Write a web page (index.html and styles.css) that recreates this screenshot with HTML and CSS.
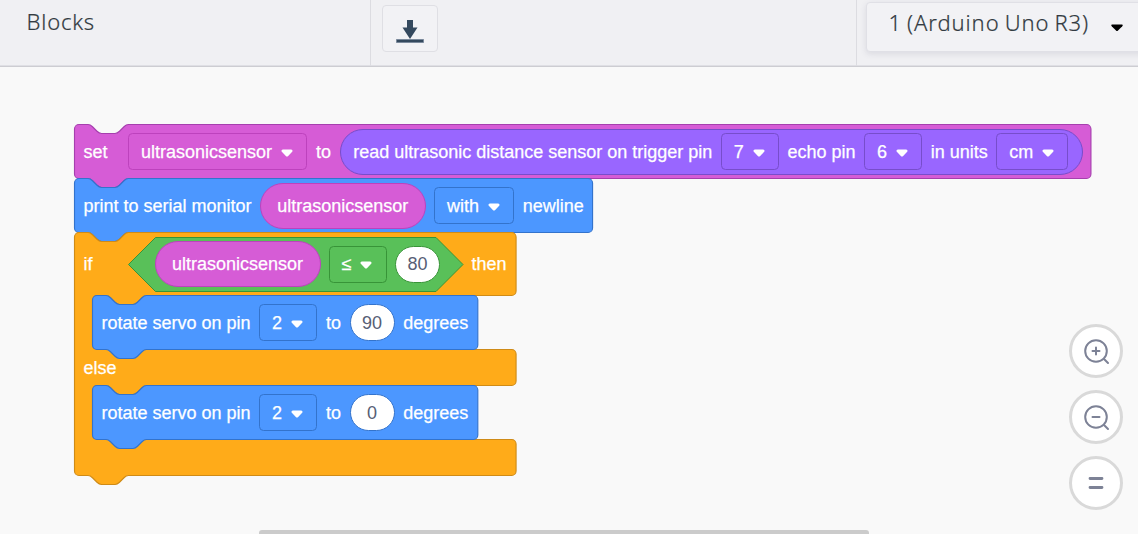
FILE: index.html
```html
<!DOCTYPE html>
<html lang="en">
<head>
<meta charset="utf-8">
<title>Blocks</title>
<link rel="stylesheet" href="styles.css">
</head>
<body>
<svg class="defs" width="0" height="0">
  <symbol id="caret" viewBox="0 0 12 8"><path d="M1.800 .5H10.200Q12.200 1 11.200 2.700L7.200 6.900Q6 7.900 4.800 6.900L.8 2.700Q-.2 1 1.800 .5Z" fill="#fff"/></symbol>
</svg>
<div class="app">
  <header class="bar">
    <div class="mode">Blocks</div>
    <div class="tools">
      <button class="download" aria-label="Download">
        <svg width="28" height="24" viewBox="0 0 28 24"><path d="M11 0H17V7.500H21.500L14 19L6.500 7.500H11Z" fill="#34495e"/><path d="M.5 19.500H27.500V22.500H.5Z" fill="#34495e" stroke="#7a899b" stroke-width="1"/></svg>
      </button>
    </div>
    <div class="target">
      <div class="device"><span class="device-name">1 (Arduino Uno R3)</span>
        <svg width="12" height="8" viewBox="0 0 12 8"><path d="M1 .5H11Q12.300 1 11.300 2.200L7 6.600Q6 7.600 5 6.600L.7 2.200Q-.3 1 1 .5Z" fill="#000"/></svg>
      </div>
    </div>
  </header>
  <main class="canvas">
    <div class="stack">
      <div class="block set">
        <svg class="shape"><path transform="translate(.5 .5) scale(1.125)" d="M0 4A4 4 0 0 1 4 0H12c2 0 3 1 4 2l4 4c1 1 2 2 4 2h12c2 0 3-1 4-2l4-4c1-1 2-2 4-2H899.500a4 4 0 0 1 4 4V44a4 4 0 0 1-4 4H48c-2 0-3 1-4 2l-4 4c-1 1-2 2-4 2H24c-2 0-3-1-4-2l-4-4c-1-1-2-2-4-2H4a4 4 0 0 1-4-4Z"/></svg>
        <span class="lead">set</span>
        <span class="field">ultrasonicsensor<svg class="caret"><use href="#caret"/></svg></span>
        <span>to</span>
        <span class="pill sensor">
          <span>read ultrasonic distance sensor on trigger pin</span>
          <span class="field">7<svg class="caret"><use href="#caret"/></svg></span>
          <span>echo pin</span>
          <span class="field">6<svg class="caret"><use href="#caret"/></svg></span>
          <span>in units</span>
          <span class="field">cm<svg class="caret"><use href="#caret"/></svg></span>
        </span>
      </div>
      <div class="block print">
        <svg class="shape"><path transform="translate(.5 .5) scale(1.125)" d="M0 4A4 4 0 0 1 4 0H12c2 0 3 1 4 2l4 4c1 1 2 2 4 2h12c2 0 3-1 4-2l4-4c1-1 2-2 4-2H456.500a4 4 0 0 1 4 4V44a4 4 0 0 1-4 4H48c-2 0-3 1-4 2l-4 4c-1 1-2 2-4 2H24c-2 0-3-1-4-2l-4-4c-1-1-2-2-4-2H4a4 4 0 0 1-4-4Z"/></svg>
        <span>print to serial monitor</span>
        <span class="pill variable">ultrasonicsensor</span>
        <span class="field">with<svg class="caret"><use href="#caret"/></svg></span>
        <span>newline</span>
      </div>
      <div class="branch">
        <svg class="shape"><path transform="translate(.5 .5) scale(1.125)" d="M0 4A4 4 0 0 1 4 0H12c2 0 3 1 4 2l4 4c1 1 2 2 4 2h12c2 0 3-1 4-2l4-4c1-1 2-2 4-2H388.500a4 4 0 0 1 4 4V52a4 4 0 0 1-4 4H64c-2 0-3 1-4 2l-4 4c-1 1-2 2-4 2H40c-2 0-3-1-4-2l-4-4c-1-1-2-2-4-2H20a4 4 0 0 0-4 4V100a4 4 0 0 0 4 4H388.500a4 4 0 0 1 4 4V132a4 4 0 0 1-4 4H64c-2 0-3 1-4 2l-4 4c-1 1-2 2-4 2H40c-2 0-3-1-4-2l-4-4c-1-1-2-2-4-2H20a4 4 0 0 0-4 4V180a4 4 0 0 0 4 4H388.500a4 4 0 0 1 4 4V212a4 4 0 0 1-4 4H48c-2 0-3 1-4 2l-4 4c-1 1-2 2-4 2H24c-2 0-3-1-4-2l-4-4c-1-1-2-2-4-2H4a4 4 0 0 1-4-4Z"/></svg>
        <div class="condition">
          <span class="lead">if</span>
          <span class="hex">
            <svg class="shape"><path d="M.5 27.500L27.500.5H308L335 27.500L308 54.500H27.500Z"/></svg>
            <span class="pill variable">ultrasonicsensor</span>
            <span class="field">≤<svg class="caret"><use href="#caret"/></svg></span>
            <span class="value">80</span>
          </span>
          <span>then</span>
        </div>
        <div class="block servo">
          <svg class="shape"><path transform="translate(.5 .5) scale(1.125)" d="M0 4A4 4 0 0 1 4 0H12c2 0 3 1 4 2l4 4c1 1 2 2 4 2h12c2 0 3-1 4-2l4-4c1-1 2-2 4-2H338.500a4 4 0 0 1 4 4V44a4 4 0 0 1-4 4H48c-2 0-3 1-4 2l-4 4c-1 1-2 2-4 2H24c-2 0-3-1-4-2l-4-4c-1-1-2-2-4-2H4a4 4 0 0 1-4-4Z"/></svg>
          <span>rotate servo on pin</span>
          <span class="field">2<svg class="caret"><use href="#caret"/></svg></span>
          <span>to</span>
          <span class="value">90</span>
          <span>degrees</span>
        </div>
        <div class="else">else</div>
        <div class="block servo">
          <svg class="shape"><path transform="translate(.5 .5) scale(1.125)" d="M0 4A4 4 0 0 1 4 0H12c2 0 3 1 4 2l4 4c1 1 2 2 4 2h12c2 0 3-1 4-2l4-4c1-1 2-2 4-2H338.500a4 4 0 0 1 4 4V44a4 4 0 0 1-4 4H48c-2 0-3 1-4 2l-4 4c-1 1-2 2-4 2H24c-2 0-3-1-4-2l-4-4c-1-1-2-2-4-2H4a4 4 0 0 1-4-4Z"/></svg>
          <span>rotate servo on pin</span>
          <span class="field">2<svg class="caret"><use href="#caret"/></svg></span>
          <span>to</span>
          <span class="value">0</span>
          <span>degrees</span>
        </div>
      </div>
    </div>
    <nav class="zoom">
      <button aria-label="Zoom in"><svg width="48" height="48" viewBox="0 0 48 48"><circle cx="24" cy="24" r="10.800"/><path d="M32 32L36 36M24 20.500V27.500M20.500 24H27.500"/></svg></button>
      <button aria-label="Zoom out"><svg width="48" height="48" viewBox="0 0 48 48"><circle cx="24" cy="24" r="10.800"/><path d="M32 32L36 36M20.500 24H27.500"/></svg></button>
      <button aria-label="Reset zoom"><svg width="48" height="48" viewBox="0 0 48 48"><path class="thick" d="M18 19.500H30M18 28.500H30"/></svg></button>
    </nav>
    <div class="scrollbar"></div>
  </main>
</div>
</body>
</html>
```

FILE: styles.css
```css
* { box-sizing: border-box; }
body { margin: 0; background: #f9f9f9; }
.defs { position: absolute; }
button { padding: 0; font: inherit; }
.app { height: 534px; display: flex; flex-direction: column; overflow: hidden; }

.bar {
  height: 67px;
  flex: none;
  display: flex;
  background: #f0f0f3;
  border-bottom: 1px solid #cdcdd2;
  box-shadow: inset 0 -1px #dfdfe4;
  font-family: "Noto Sans", "Open Sans", sans-serif;
  font-weight: 300;
  font-size: 22px;
  line-height: 30px;
  color: #333b42;
  -webkit-text-stroke: .2px currentColor;
}
.mode { width: 371px; padding: 6px 0 0 26.5px; border-right: 1px solid #dcdce1; letter-spacing: .8px; }
.tools { width: 486px; padding: 5px 0 0 11px; border-right: 1px solid #dcdce1; }
.download {
  width: 56px;
  height: 47px;
  display: grid;
  place-items: center;
  padding-top: 6px;
  background: #f2f2f5;
  border: 1px solid #dfdfe4;
  border-radius: 4px;
}
.target { flex: 1; padding: 2px 0 0 9px; overflow: hidden; }
.device {
  width: 290px;
  height: 50px;
  display: flex;
  align-items: flex-start;
  padding: 4px 0 0 21.5px;
  background: #f2f2f5;
  border: 1px solid #e0e0e6;
  border-radius: 4px;
  box-shadow: 0 2px 6px rgba(60, 60, 90, .12);
  letter-spacing: .9px;
  word-spacing: -1.5px;
}
.device-name { width: 222.5px; white-space: nowrap; }
.device svg { margin-top: 17px; }

.canvas {
  flex: 1;
  display: grid;
  grid-template-columns: minmax(0, 1fr) 54px;
  grid-template-rows: 1fr 4px;
  padding: 57px 15px 0 74px;
}
.stack {
  font-family: "Liberation Sans", Arial, sans-serif;
  font-size: 18px;
  line-height: 22px;
  color: #fff;
  white-space: nowrap;
  -webkit-text-stroke: .25px currentColor;
}
.block { position: relative; height: 54px; display: flex; align-items: center; gap: 8.6px; padding: 1px 0 0 9.4px; }
.block > *, .condition > * { flex: none; position: relative; }
.print { gap: 8.3px; }
.lead { width: 36px; }
.stack .shape { position: absolute; left: 0; top: 0; width: 1px; height: 1px; overflow: visible; }
.set .shape { fill: #d65cd6; stroke: #a63fae; }
.print .shape, .servo .shape { fill: #4c97ff; stroke: #3373cc; }
.branch > .shape { fill: #ffab19; stroke: #cf8b17; }

.field {
  height: 37px;
  display: inline-flex;
  align-items: center;
  padding: 0 13.5px 0 12px;
  border: 1px solid #bd42bd;
  border-radius: 4.5px;
}
.print .field, .servo .field { border-color: #3373cc; }
.caret { width: 12px; height: 8px; margin: 2px 0 0 8.8px; }
.pill {
  height: 46px;
  display: inline-flex;
  align-items: center;
  gap: 8.7px;
  border: 1px solid #bd42bd;
  border-radius: 23px;
}
.variable { width: 166px; justify-content: center; background: #d65cd6; }
.sensor { width: 743px; padding-left: 12.6px; background: #9966ff; border-color: #774dcb; }
.sensor .field { border-color: #774dcb; padding: 0 13.3px 0 11.7px; }
.value {
  width: 45px;
  height: 37px;
  display: inline-flex;
  align-items: center;
  justify-content: center;
  background: #fff;
  border: 1px solid #3373cc;
  border-radius: 18.5px;
  color: #575e75;
  -webkit-text-stroke: 0;
}

.branch { position: relative; height: 252px; }
.condition { height: 63px; display: flex; align-items: center; gap: 8.6px; padding: 1px 0 0 9.4px; position: relative; }
.hex { width: 335px; height: 55px; display: flex; align-items: center; gap: 8.1px; padding-left: 26.6px; }
.hex > * { position: relative; flex: none; }
.hex .shape { fill: #59c059; stroke: #389438; }
.hex .field, .hex .value { border-color: #389438; }
.servo { margin-left: 18px; }
.else { position: relative; height: 36px; padding: 8px 0 0 9.4px; }

.zoom { display: flex; flex-direction: column; gap: 12px; padding-top: 200px; }
.zoom button { width: 54px; height: 54px; flex: none; display: grid; place-items: center; background: #fff; border: 3px solid #d9d9d9; border-radius: 50%; }
.zoom svg { fill: none; stroke: #7d8296; stroke-width: 2; stroke-linecap: round; }
.zoom .thick { stroke-width: 2.8; }
.scrollbar { width: 610px; height: 6px; margin-left: 185px; background: #cbcbcb; border-radius: 3px; }
```
